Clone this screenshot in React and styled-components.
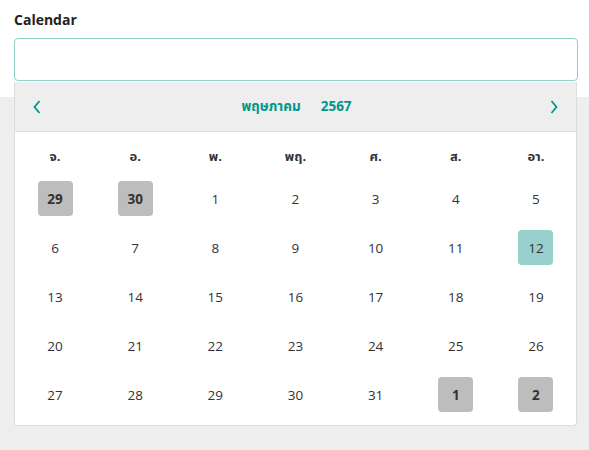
import React, { useState } from "react";
import styled, { createGlobalStyle } from "styled-components";

const GlobalStyle = createGlobalStyle`
  body {
    margin: 0;
    background: #ffffff;
    font-family: 'Open Sans', 'Noto Sans', 'Noto Sans Thai', 'Noto Sans Thai UI', sans-serif;
    color: #333333;
  }
`
const Page = styled.div`
  display: flex;
  flex-direction: column;
  width: 589px;
  height: 450px;
`
const Top = styled.div`
  position: relative;
  display: flex;
  flex-direction: column;
  padding: 11px 11px 0 14px;
  height: 97px;
  box-sizing: border-box;
`
const Label = styled.label`
  font-size: 14px;
  font-weight: 700;
  line-height: 18px;
  color: #222222;
  margin-bottom: 9px;
`
const Field = styled.div`
  position: relative;
`
const Input = styled.input`
  display: block;
  width: 100%;
  height: 43px;
  box-sizing: border-box;
  border: 1px solid #8fd0c9;
  border-radius: 4px;
  outline: none;
  font: inherit;
`
const Rest = styled.div`
  flex: 1;
  background: #eeeeee;
`
const Popup = styled.div`
  position: absolute;
  top: 44px;
  left: 0;
  width: 561px;
  background: #ffffff;
  border: 1px solid #dddddd;
  border-top: none;
  border-radius: 0 0 4px 4px;
  z-index: 2;
`
const Header = styled.div`
  display: flex;
  align-items: center;
  justify-content: space-between;
  height: 49px;
  padding: 0 17px 0 17px;
  background: #eeeeee;
  border-bottom: 1px solid #dddddd;
`
const NavButton = styled.button`
  display: flex;
  align-items: center;
  justify-content: center;
  width: 10px;
  height: 24px;
  padding: 0;
  border: none;
  background: none;
  cursor: pointer;
`
const Title = styled.div`
  display: flex;
  gap: 20px;
  margin-left: 2px;
  font-size: 13.5px;
  font-weight: 700;
  color: #00968a;
`
const Grid = styled.div`
  display: grid;
  grid-template-columns: repeat(7, 1fr);
  grid-template-rows: 34px repeat(5, 49px);
  padding: 8px 0 6px;
`
const WeekDay = styled.div`
  display: flex;
  align-items: center;
  justify-content: center;
  font-size: 13px;
  font-weight: 700;
  color: #333333;
`
const Cell = styled.div`
  display: flex;
  align-items: center;
  justify-content: center;
`
const Day = styled.div`
  display: flex;
  align-items: center;
  justify-content: center;
  width: 35px;
  height: 35px;
  border-radius: 4px;
  font-size: 13.5px;
  font-weight: ${p => (p.$outside ? 700 : 400)};
  color: #333333;
  cursor: pointer;
  background: ${p => (p.$selected ? '#96d1cb' : p.$outside ? '#bdbdbd' : 'transparent')};
`

const Chevron = ({ dir }) => (
  <svg width="8" height="14" viewBox="0 0 8 14" fill="none">
    <path
      d={dir === 'left' ? 'M6.5 1 L1.5 7 L6.5 13' : 'M1.5 1 L6.5 7 L1.5 13'}
      stroke="#00968a"
      strokeWidth="1.8"
    />
  </svg>
)

const weekDays = ['จ.', 'อ.', 'พ.', 'พฤ.', 'ศ.', 'ส.', 'อา.']

function buildDays() {
  const days = [{ n: 29, out: true }, { n: 30, out: true }]
  for (let i = 1; i <= 31; i++) days.push({ n: i, out: false })
  days.push({ n: 1, out: true }, { n: 2, out: true })
  return days
}

export default function App() {
  const [selected, setSelected] = useState(12)
  const days = buildDays()

  return (
    <>
      <GlobalStyle />
      <Page>
        <Top>
          <Label>Calendar</Label>
          <Field>
            <Input />
            <Popup>
              <Header>
                <NavButton><Chevron dir="left" /></NavButton>
                <Title>
                  <span>พฤษภาคม</span>
                  <span>2567</span>
                </Title>
                <NavButton><Chevron dir="right" /></NavButton>
              </Header>
              <Grid>
                {weekDays.map(w => <WeekDay key={w}>{w}</WeekDay>)}
                {days.map((d, idx) => (
                  <Cell key={idx}>
                    <Day
                      $outside={d.out}
                      $selected={!d.out && d.n === selected}
                      onClick={() => !d.out && setSelected(d.n)}
                    >
                      {d.n}
                    </Day>
                  </Cell>
                ))}
              </Grid>
            </Popup>
          </Field>
        </Top>
        <Rest />
      </Page>
    </>
  )
}
